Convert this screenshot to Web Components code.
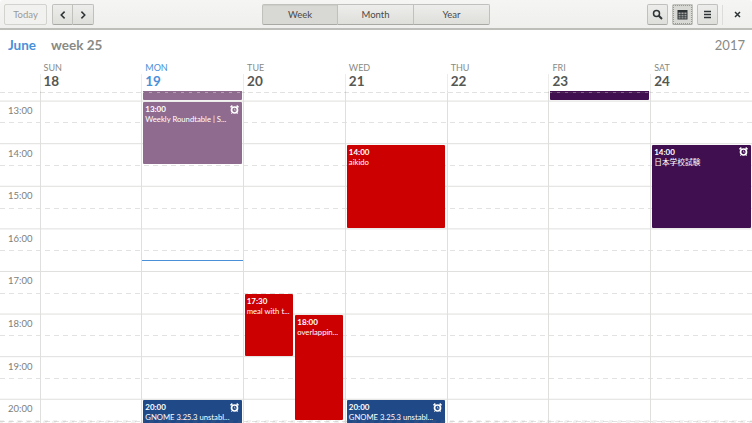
<!DOCTYPE html>
<html>
<head>
<meta charset="utf-8">
<style>
  html, body { margin: 0; height: 100%; background: #fff; overflow: hidden; }
  body { font-family: Lato, "Noto Sans CJK JP", sans-serif; }
</style>
</head>
<body>
<cal-app>
  <cal-toolbar></cal-toolbar>
  <cal-week-header month="June" week="week 25" year="2017"></cal-week-header>
  <cal-week-grid>
    <cal-event slot="mon" start="12" hours="0.99" color="#8f6b8f"></cal-event>
    <cal-event slot="mon" start="13" hours="1.5" color="#8f6b8f" time="13:00" title="Weekly Roundtable | S..." alarm></cal-event>
    <cal-event slot="tue" start="17.5" hours="1.5" color="#cc0000" time="17:30" title="meal with t..." lane="0"></cal-event>
    <cal-event slot="tue" start="18" hours="2.5" color="#cc0000" time="18:00" title="overlappin..." lane="1"></cal-event>
    <cal-event slot="wed" start="14" hours="2" color="#cc0000" time="14:00" title="aikido"></cal-event>
    <cal-event slot="fri" start="12" hours="0.99" color="#3f0f4f"></cal-event>
    <cal-event slot="sat" start="14" hours="2" color="#3f0f4f" time="14:00" title="日本学校試験" alarm></cal-event>
    <cal-event slot="mon" start="20" hours="2" color="#204a87" time="20:00" title="GNOME 3.25.3 unstabl..." alarm></cal-event>
    <cal-event slot="wed" start="20" hours="2" color="#204a87" time="20:00" title="GNOME 3.25.3 unstabl..." alarm></cal-event>
    <cal-now-line slot="mon"></cal-now-line>
  </cal-week-grid>
</cal-app>

<script>
const ROW = 42.6;
const FIRST_HOUR = 12;
const COLUMNS = '39.5px repeat(7, 1fr)';

customElements.define('cal-app', class extends HTMLElement {
  constructor() {
    super();
    this.attachShadow({mode: 'open'}).innerHTML = `
      <style>
        :host { display: flex; flex-direction: column; width: 752px; height: 423px; overflow: hidden; color: #555; }
      </style>
      <slot></slot>`;
  }
});

customElements.define('cal-button', class extends HTMLElement {
  constructor() {
    super();
    this.attachShadow({mode: 'open'}).innerHTML = `
      <style>
        :host {
          display: flex; align-items: center; justify-content: center; box-sizing: border-box;
          height: 21px; font-size: 9.5px; color: #4a4a4a;
          border: 1px solid #c0c0bc; border-bottom-color: #a8a8a4; border-radius: 2px;
          background: linear-gradient(#ededeb, #dededb);
        }
        :host([active]) { background: #d8d8d5; box-shadow: inset 0 1px 1px rgba(0,0,0,.06); }
        :host([focus]) { outline: 1px dotted #9a9a96; outline-offset: -2px; }
        :host([disabled]) { background: #f1f1ef; color: #9a9a98; border-color: #d2d2cf; }
        :host([first]) { border-radius: 2px 0 0 2px; }
        :host([mid]) { border-radius: 0; border-left: 0; }
        :host([last]) { border-radius: 0 2px 2px 0; border-left: 0; }
      </style>
      <slot></slot>`;
  }
});

customElements.define('cal-toolbar', class extends HTMLElement {
  constructor() {
    super();
    this.attachShadow({mode: 'open'}).innerHTML = `
      <style>
        :host {
          display: grid; grid-template-columns: 1fr auto 1fr; align-items: start; flex: none;
          box-sizing: border-box; height: 30px; padding-top: 4px;
          background: linear-gradient(#f5f5f4, #efefed);
          border-bottom: 2px solid #bdbdba; border-radius: 3px 3px 0 0;
        }
        .left, .right, .group { display: flex; align-items: center; }
        .left { gap: 5px; padding-left: 4px; }
        .right { justify-content: flex-end; }
        .today { width: 43px; }
        .nav { width: 21px; }
        .view { width: 76px; }
        .tool { width: 21px; margin-right: 4px; }
        .sep { width: 1px; height: 20px; background: #dcdcda; }
        .close { width: 29px; height: 20px; display: flex; align-items: center; justify-content: center; }
        svg { display: block; }
      </style>
      <div class="left">
        <cal-button class="today" disabled>Today</cal-button>
        <div class="group">
          <cal-button class="nav" first>
            <svg width="10" height="10" viewBox="0 0 10 10"><path d="M6.6 1.6 3.2 5l3.4 3.4" fill="none" stroke="#2e3436" stroke-width="1.5"/></svg>
          </cal-button>
          <cal-button class="nav" last>
            <svg width="10" height="10" viewBox="0 0 10 10"><path d="M3.4 1.6 6.8 5 3.4 8.4" fill="none" stroke="#2e3436" stroke-width="1.5"/></svg>
          </cal-button>
        </div>
      </div>
      <div class="group">
        <cal-button class="view" first active>Week</cal-button>
        <cal-button class="view" mid>Month</cal-button>
        <cal-button class="view" last>Year</cal-button>
      </div>
      <div class="right">
        <cal-button class="tool">
          <svg width="11" height="11" viewBox="0 0 11 11"><circle cx="4.5" cy="4.5" r="3" fill="none" stroke="#2e3436" stroke-width="1.5"/><path d="M6.8 6.8 10 10" stroke="#2e3436" stroke-width="2"/></svg>
        </cal-button>
        <cal-button class="tool" active focus>
          <svg width="11" height="11" viewBox="0 0 11 11"><rect x="1" y="1.5" width="9" height="8.5" fill="#a4a6a6" stroke="#2e3436"/><path d="M1 1.5h9v2H1z" fill="#2e3436"/><path d="M1 5.6h9M1 7.8h9M4 3v7M7 3v7" stroke="#2e3436" stroke-width=".8"/></svg>
        </cal-button>
        <cal-button class="tool">
          <svg width="11" height="11" viewBox="0 0 11 11"><path d="M2 2.5h7M2 5.5h7M2 8.5h7" stroke="#2e3436" stroke-width="1.3"/></svg>
        </cal-button>
        <div class="sep"></div>
        <div class="close">
          <svg width="9" height="9" viewBox="0 0 9 9"><path d="M2 2l5 5M7 2 2 7" stroke="#2e3436" stroke-width="1.5"/></svg>
        </div>
      </div>`;
  }
});

customElements.define('cal-week-header', class extends HTMLElement {
  constructor() {
    super();
    const days = [['SUN', 18], ['MON', 19], ['TUE', 20], ['WED', 21], ['THU', 22], ['FRI', 23], ['SAT', 24]];
    const cells = days.map(([name, num]) => `
      <div class="day ${name == 'MON' ? 'today' : ''}">
        <div class="name">${name}</div>
        <div class="num">${num}</div>
      </div>`).join('');
    this.attachShadow({mode: 'open'}).innerHTML = `
      <style>
        :host { display: block; flex: none; height: 61px; box-sizing: border-box; }
        .title { display: flex; align-items: baseline; height: 30px; padding: 7px 7px 0 8px; box-sizing: border-box; font-size: 13.5px; }
        .month { color: #4a90d9; font-weight: 700; width: 43px; }
        .week { color: #888a85; font-weight: 700; }
        .year { margin-left: auto; color: #888a85; font-size: 13px; }
        .days { display: grid; grid-template-columns: ${COLUMNS}; height: 31px; }
        .day { padding: 2px 0 0 4px; box-sizing: border-box; position: relative; }
        .day::before { content: ""; position: absolute; left: 0; top: 14px; bottom: 0; width: 1px; background: #ececea; }
        .name { font-size: 9px; line-height: 11px; color: #888a85; }
        .num { font-size: 13.5px; line-height: 16px; font-weight: 700; color: #555753; }
        .today .name, .today .num { color: #4a90d9; }
      </style>
      <div class="title">
        <span class="month">${this.getAttribute('month')}</span>
        <span class="week">${this.getAttribute('week')}</span>
        <span class="year">${this.getAttribute('year')}</span>
      </div>
      <div class="days"><div></div>${cells}</div>`;
  }
});

customElements.define('cal-week-grid', class extends HTMLElement {
  constructor() {
    super();
    // the 12:00 row is scrolled out of view, so its label stays empty
    let hours = '<div class="hour"></div>';
    for (let h = FIRST_HOUR + 1; h <= 20; h++) hours += `<div class="hour">${h}:00</div>`;
    const cols = ['sun', 'mon', 'tue', 'wed', 'thu', 'fri', 'sat']
      .map(d => `<div class="col"><slot name="${d}"></slot></div>`).join('');
    const dashes = Array.from({length: 9}, (_, i) => `<div class="dash" style="top:${(i + .5) * ROW}px"></div>`).join('');
    this.attachShadow({mode: 'open'}).innerHTML = `
      <style>
        :host { display: block; flex: 1; min-height: 0; position: relative; overflow: hidden; }
        .body {
          display: grid; grid-template-columns: ${COLUMNS}; margin-top: ${58.4 - 91}px;
          height: ${9 * ROW}px; position: relative;
          background: linear-gradient(#dfdfdd 1px, transparent 1px) 0 0 / 100% ${ROW}px;
        }
        .hours { display: flex; flex-direction: column; }
        .hour { height: ${ROW}px; box-sizing: border-box; padding: 4px 0 0 8px; font-size: 9.5px; line-height: 12px; color: #808078; flex: none; }
        .col { position: relative; border-left: 1px solid #dfdfdd; }
        .dash {
          position: absolute; left: 0; right: 0; height: 1px;
          background: repeating-linear-gradient(to right, #e2e2e0 0 5px, transparent 5px 9px);
        }
        .edge { position: absolute; left: 0; right: 0; }
        .top {
          top: 1px; height: 1px;
          background: repeating-linear-gradient(to right, rgba(120,120,115,.22) 0 5px, rgba(255,255,255,.35) 5px 8px);
        }
        .bottom {
          bottom: 0; height: 3px;
          background: repeating-linear-gradient(115deg, rgba(120,120,115,.1) 0 4px, transparent 4px 8px);
        }
      </style>
      <div class="body">
        ${dashes}
        <div class="hours">${hours}</div>
        ${cols}
      </div>
      <div class="edge top"></div>
      <div class="edge bottom"></div>`;
  }
});

customElements.define('cal-event', class extends HTMLElement {
  constructor() {
    super();
    this.attachShadow({mode: 'open'});
  }
  connectedCallback() {
    const start = +this.getAttribute('start');
    const hours = +this.getAttribute('hours');
    const color = this.getAttribute('color');
    const lane = this.getAttribute('lane');
    const time = this.getAttribute('time') || '';
    const title = this.getAttribute('title') || '';
    this.removeAttribute('title');
    const alarm = this.hasAttribute('alarm') ? `
      <svg class="alarm" width="9" height="9" viewBox="0 0 9 9">
        <circle cx="4.5" cy="5" r="3" fill="none" stroke="#fff" stroke-width="1.7"/>
        <path d="M.5 2.4 2.4.6M8.5 2.4 6.6.6" stroke="#fff" stroke-width="1.5"/>
        <path d="M4.5 3.6v1.6h1.2" fill="none" stroke="#fff" stroke-width=".7" opacity=".75"/>
        <path d="M2.2 7.6 1.4 8.8M6.8 7.6l.8 1.2" stroke="#fff" stroke-width=".9"/>
      </svg>` : '';
    let place = 'left: 1px; right: 1.2px;';
    if (lane == '0') place = 'left: .6px; width: 48px;';
    if (lane == '1') place = 'left: 51.2px; width: 48px;';
    this.shadowRoot.innerHTML = `
      <style>
        :host {
          display: block; position: absolute; box-sizing: border-box; overflow: hidden;
          ${place}
          top: ${(start - FIRST_HOUR) * ROW + 1}px; height: ${hours * ROW - 1.5}px;
          background: ${color}; color: #fff; border-radius: 1px; padding: 1px 0 0 2px;
        }
        .time { font-size: 8px; line-height: 10px; font-weight: 700; padding-top: 1px; }
        .title { font-size: 7.7px; line-height: 10px; white-space: nowrap; font-feature-settings: "pnum"; }
        .alarm { position: absolute; right: 3px; top: 2.5px; }
      </style>
      <div class="time">${time}</div>
      <div class="title">${title}</div>
      ${alarm}`;
  }
});

customElements.define('cal-now-line', class extends HTMLElement {
  constructor() {
    super();
    this.attachShadow({mode: 'open'}).innerHTML = `
      <style>
        :host { display: block; position: absolute; left: 0; right: 0; top: ${261 - 58.4 - .6}px; height: 1px; background: #4a90d9; }
      </style>`;
  }
});
</script>
</body>
</html>
